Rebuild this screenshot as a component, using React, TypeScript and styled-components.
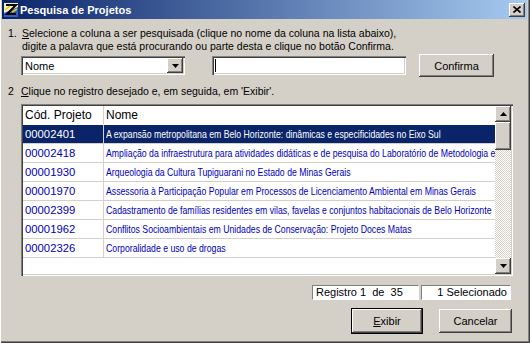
import React from "react";
import styled, { createGlobalStyle } from "styled-components";

const GlobalStyle = createGlobalStyle`
  html, body {
    margin: 0;
    padding: 0;
    background: #d4d0c8;
  }
  body {
    font-family: "Liberation Sans", Arial, sans-serif;
    font-size: 10.5px;
    color: #000;
  }
`;

const raised = `
  box-shadow: inset -1px -1px 0 #404040, inset 1px 1px 0 #ffffff,
    inset -2px -2px 0 #808080, inset 2px 2px 0 #d4d0c8;
`;

const sunken = `
  box-shadow: inset 1px 1px 0 #808080, inset 2px 2px 0 #404040,
    inset -1px -1px 0 #ffffff, inset -2px -2px 0 #d4d0c8;
`;

const Window = styled.div`
  width: 530px;
  height: 343px;
  box-sizing: border-box;
  padding: 0 3px 3px 2px;
  background: #d4d0c8;
  display: flex;
  flex-direction: column;
  box-shadow: inset 1px 0 0 #ffffff, inset -1px -1px 0 #404040,
    inset -2px -2px 0 #808080;
`;

const TitleBar = styled.div`
  height: 19px;
  flex: none;
  display: flex;
  align-items: center;
  padding: 0 2px 0 2px;
  background: linear-gradient(to right, #0a246a, #a6caf0);
  color: #fff;
  font-weight: bold;
  font-size: 11px;
`;

const TitleText = styled.span`
  margin-left: 2px;
  flex: 1;
`;

const CloseButton = styled.div`
  width: 16px;
  height: 14px;
  background: #d4d0c8;
  ${raised}
  display: flex;
  align-items: center;
  justify-content: center;
`;

const Body = styled.div`
  flex: 1;
  display: flex;
  flex-direction: column;
  padding: 8px 0 0 6px;
`;

const Step = styled.div<{ $top?: number }>`
  display: flex;
  line-height: 13px;
  margin-top: ${(p) => p.$top ?? 0}px;
`;

const StepNum = styled.span<{ $w: number }>`
  flex: none;
  width: ${(p) => p.$w}px;
`;

const SearchRow = styled.div`
  display: flex;
  align-items: center;
  height: 23px;
  margin: 1px 0 0 13px;
`;

const Select = styled.div`
  width: 164px;
  height: 19px;
  box-sizing: border-box;
  background: #fff;
  ${sunken}
  display: flex;
  align-items: center;
  padding: 2px;
`;

const SelectValue = styled.span`
  flex: 1;
  padding-left: 2px;
  font-size: 11px;
`;

const ArrowButton = styled.div<{ $h?: number }>`
  width: 16px;
  height: ${(p) => p.$h ?? 15}px;
  flex: none;
  box-sizing: border-box;
  background: #d4d0c8;
  ${raised}
  display: flex;
  align-items: center;
  justify-content: center;
`;

const TextInput = styled.div`
  width: 194px;
  height: 19px;
  margin-left: 27px;
  box-sizing: border-box;
  background: #fff;
  ${sunken}
  display: flex;
  align-items: center;
  padding-left: 3px;
`;

const Caret = styled.span`
  width: 1px;
  height: 13px;
  background: #000;
`;

const Button = styled.div<{ $w: number; $h?: number; $default?: boolean }>`
  width: ${(p) => p.$w}px;
  height: ${(p) => p.$h ?? 23}px;
  box-sizing: border-box;
  background: #d4d0c8;
  display: flex;
  align-items: center;
  justify-content: center;
  font-size: 11px;
  ${(p) =>
    p.$default
      ? `border: 1px solid #000;
         box-shadow: inset -1px -1px 0 #404040, inset 1px 1px 0 #ffffff,
           inset -2px -2px 0 #808080;`
      : raised}
`;

const Grid = styled.div`
  margin: 6px 0 0 13px;
  width: 492px;
  height: 172px;
  box-sizing: border-box;
  padding: 2px;
  background: #fff;
  ${sunken}
  display: flex;
`;

const Table = styled.div`
  flex: 1;
  overflow: hidden;
  display: flex;
  flex-direction: column;
`;

const Row = styled.div<{ $selected?: boolean; $header?: boolean }>`
  display: flex;
  height: 19px;
  flex: none;
  box-sizing: border-box;
  border-bottom: 1px solid ${(p) => (p.$header ? "#fff" : "#d4d0c8")};
  background: ${(p) => (p.$selected ? "#0a246a" : "#fff")};
  color: ${(p) => (p.$selected ? "#fff" : p.$header ? "#000" : "#0000c0")};
  white-space: nowrap;
`;

const CodeCell = styled.div<{ $header?: boolean }>`
  width: 81px;
  flex: none;
  box-sizing: border-box;
  padding-left: 2px;
  border-right: 1px solid #d4d0c8;
  display: flex;
  align-items: center;
  font-size: ${(p) => (p.$header ? 12 : 11.3)}px;
`;

const NameCell = styled.div<{ $header?: boolean }>`
  flex: 1;
  min-width: 0;
  padding-left: 2px;
  display: flex;
  align-items: center;
  overflow: hidden;
  font-size: ${(p) => (p.$header ? 12 : 11)}px;
`;

/* narrow face of the original grid (Arial Narrow) */
const NameText = styled.span`
  display: inline-block;
  transform: scaleX(0.792);
  transform-origin: 0 50%;
`;

const ScrollBar = styled.div`
  width: 16px;
  flex: none;
  display: flex;
  flex-direction: column;
  background: repeating-conic-gradient(#d4d0c8 0 25%, #ffffff 0 50%) 0 0 / 2px 2px;
`;

const Thumb = styled.div`
  height: 28px;
  background: #d4d0c8;
  ${raised}
`;

const Track = styled.div`
  flex: 1;
`;

const StatusRow = styled.div`
  display: flex;
  justify-content: flex-end;
  gap: 2px;
  margin: 9px 16px 0 0;
`;

const StatusPanel = styled.div<{ $w: number; $right?: boolean }>`
  width: ${(p) => p.$w}px;
  height: 15px;
  box-sizing: border-box;
  background: #fff;
  border-top: 1px solid #808080;
  border-left: 1px solid #808080;
  border-bottom: 1px solid #fff;
  border-right: 1px solid #fff;
  font-size: 11px;
  line-height: 13px;
  white-space: pre;
  padding: 0 3px;
  text-align: ${(p) => (p.$right ? "right" : "left")};
`;

const ButtonRow = styled.div`
  display: flex;
  justify-content: flex-end;
  align-items: center;
  gap: 16px;
  margin: 8px 15px 0 0;
`;

const TitleIcon = () => (
  <svg width="14" height="14" viewBox="0 0 14 14">
    <rect x="0" y="0" width="14" height="14" fill="#f4f0d0" />
    <path d="M0 10 L14 4 L14 14 L0 14 Z" fill="#2c5fc0" />
    <path d="M2 2 H12 L3 11 H12" stroke="#000" strokeWidth="2" fill="none" />
    <path d="M1 7 L6 3 M8 9 L13 6" stroke="#e8c800" strokeWidth="1.5" />
  </svg>
);

const CloseGlyph = () => (
  <svg width="8" height="7" viewBox="0 0 8 7">
    <path d="M0.5 0.5 L7.5 6.5 M7.5 0.5 L0.5 6.5" stroke="#000" strokeWidth="1.6" />
  </svg>
);

const ArrowGlyph: React.FC<{ up?: boolean }> = ({ up }) => (
  <svg width="7" height="4" viewBox="0 0 7 4">
    <path d={up ? "M3.5 0 L7 4 L0 4 Z" : "M0 0 L7 0 L3.5 4 Z"} fill="#000" />
  </svg>
);

const rows = [
  ["00002401", "A expansão metropolitana em Belo Horizonte: dinâmicas e especificidades no Eixo Sul"],
  ["00002418", "Ampliação da infraestrutura para atividades didáticas e de pesquisa do Laboratório de Metodologia em Ensino"],
  ["00001930", "Arqueologia da Cultura Tupiguarani no Estado de Minas Gerais"],
  ["00001970", "Assessoria à Participação Popular em Processos de Licenciamento Ambiental em Minas Gerais"],
  ["00002399", "Cadastramento de famílias residentes em vilas, favelas e conjuntos habitacionais de Belo Horizonte"],
  ["00001962", "Conflitos Socioambientais em Unidades de Conservação: Projeto Doces Matas"],
  ["00002326", "Corporalidade e uso de drogas"],
];

export default function App() {
  return (
    <>
      <GlobalStyle />
      <Window>
        <TitleBar>
          <TitleIcon />
          <TitleText>Pesquisa de Projetos</TitleText>
          <CloseButton>
            <CloseGlyph />
          </CloseButton>
        </TitleBar>
        <Body>
          <Step>
            <StepNum $w={14}>1.</StepNum>
            <span>
              <u>S</u>elecione a coluna a ser pesquisada (clique no nome da coluna na lista abaixo),
              <br />
              digite a palavra que está procurando ou parte desta e clique no botão Confirma.
            </span>
          </Step>
          <SearchRow>
            <Select>
              <SelectValue>Nome</SelectValue>
              <ArrowButton>
                <ArrowGlyph />
              </ArrowButton>
            </Select>
            <TextInput>
              <Caret />
            </TextInput>
            <Button $w={75} style={{ marginLeft: 13 }}>
              Confirma
            </Button>
          </SearchRow>
          <Step $top={8}>
            <StepNum $w={13}>2</StepNum>
            <span>
              <u>C</u>lique no registro desejado e, em seguida, em 'Exibir'.
            </span>
          </Step>
          <Grid>
            <Table>
              <Row $header>
                <CodeCell $header>Cód. Projeto</CodeCell>
                <NameCell $header>Nome</NameCell>
              </Row>
              {rows.map(([code, name], i) => (
                <Row key={code} $selected={i === 0}>
                  <CodeCell>{code}</CodeCell>
                  <NameCell>
                    <NameText>{name}</NameText>
                  </NameCell>
                </Row>
              ))}
            </Table>
            <ScrollBar>
              <ArrowButton $h={16}>
                <ArrowGlyph up />
              </ArrowButton>
              <Thumb />
              <Track />
              <ArrowButton $h={16}>
                <ArrowGlyph />
              </ArrowButton>
            </ScrollBar>
          </Grid>
          <StatusRow>
            <StatusPanel $w={107}>Registro 1  de  35</StatusPanel>
            <StatusPanel $w={90} $right>
              1 Selecionado
            </StatusPanel>
          </StatusRow>
          <ButtonRow>
            <Button $w={72} $h={26} $default>
              <span>
                <u>E</u>xibir
              </span>
            </Button>
            <Button $w={73} $h={24}>
              Cancelar
            </Button>
          </ButtonRow>
        </Body>
      </Window>
    </>
  );
}
